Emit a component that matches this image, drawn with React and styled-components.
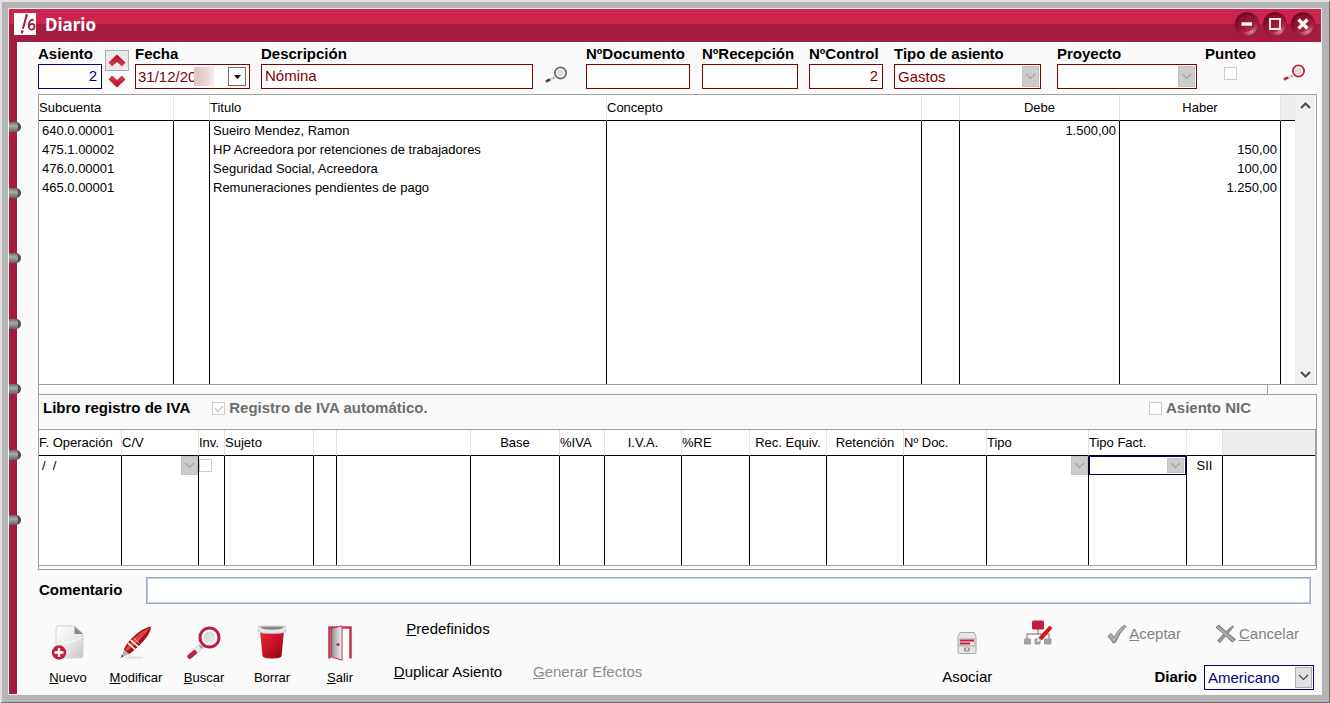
import React from "react";
import styled, { createGlobalStyle, css } from "styled-components";

const COLORS = {
  wine: "#a41c3f",
  crimson: "#cc244c",
  maroon: "#800000",
  navy: "#000080",
  panel: "#fafafa",
  frame: "#b4b4b4",
  line: "#a0a0a4",
  headerLine: "#e2e2e2",
  disabled: "#6d6d6d",
};

const ENTRIES = [
  { account: "640.0.00001", title: "Sueiro Mendez, Ramon", debit: "1.500,00", credit: "" },
  { account: "475.1.00002", title: "HP Acreedora por retenciones de trabajadores", debit: "", credit: "150,00" },
  { account: "476.0.00001", title: "Seguridad Social, Acreedora", debit: "", credit: "100,00" },
  { account: "465.0.00001", title: "Remuneraciones pendientes de pago", debit: "", credit: "1.250,00" },
];

const ENTRY_COLUMNS = [
  { label: "Subcuenta", width: 135 },
  { label: "", width: 36 },
  { label: "Titulo" },
  { label: "Concepto", width: 315 },
  { label: "", width: 38 },
  { label: "Debe", width: 160, align: "center" },
  { label: "Haber", width: 161, align: "center" },
  { label: "", width: 14, blank: true },
];

const VAT_COLUMNS = [
  { label: "F. Operación", width: 83 },
  { label: "C/V", width: 77 },
  { label: "Inv.", width: 26 },
  { label: "Sujeto", width: 89 },
  { label: "", width: 23 },
  { label: "" },
  { label: "Base", width: 89, align: "center" },
  { label: "%IVA", width: 45 },
  { label: "I.V.A.", width: 77, align: "center" },
  { label: "%RE", width: 68 },
  { label: "Rec. Equiv.", width: 77, align: "center" },
  { label: "Retención", width: 77, align: "center" },
  { label: "Nº Doc.", width: 83 },
  { label: "Tipo", width: 102 },
  { label: "Tipo Fact.", width: 98 },
  { label: "", width: 36 },
  { label: "", width: 92, blank: true },
];

const App = () => {
  return (
    <Frame>
      <GlobalStyles />
      <Window>
        <TitleBar>
          <LogoIcon />
          <Title>Diario</Title>
          <WindowActions>
            <WindowButton kind="minimize" label="Minimizar" />
            <WindowButton kind="maximize" label="Maximizar" />
            <WindowButton kind="close" label="Cerrar" />
          </WindowActions>
        </TitleBar>
        <Body>
          <Rail>
            {[0, 1, 2, 3, 4, 5, 6].map((ring) => (
              <Ring key={ring} />
            ))}
          </Rail>
          <Content>
            <EntryForm />
            <EntryTable />
            <Splitter />
            <VatPanel />
            <CommentRow>
              <BoldLabel htmlFor="comentario">Comentario</BoldLabel>
              <CommentInput id="comentario" />
            </CommentRow>
            <Footer />
          </Content>
        </Body>
      </Window>
    </Frame>
  );
};

const EntryForm = () => (
  <Form>
    <Field $gap={3}>
      <BoldLabel htmlFor="asiento">Asiento</BoldLabel>
      <TextInput id="asiento" defaultValue="2" $align="right" $color={COLORS.navy} />
    </Field>
    <Spinner>
      <SpinButton aria-label="Asiento siguiente" $raised>
        <ArrowIcon />
      </SpinButton>
      <SpinButton aria-label="Asiento anterior">
        <ArrowIcon down />
      </SpinButton>
    </Spinner>
    <Field $gap={11}>
      <BoldLabel htmlFor="fecha">Fecha</BoldLabel>
      <DateBox>
        <DateInput id="fecha" defaultValue="31/12/20" />
        <Smudge />
        <DateButton aria-label="Abrir calendario">
          <svg width="7" height="4" viewBox="0 0 7 4">
            <path d="M0 0h7L3.5 4z" fill="#000" />
          </svg>
        </DateButton>
      </DateBox>
    </Field>
    <Field $gap={12}>
      <BoldLabel htmlFor="descripcion">Descripción</BoldLabel>
      <TextInput id="descripcion" defaultValue="Nómina" />
    </Field>
    <IconButton aria-label="Buscar descripción">
      <LensIcon ring="#6a6a6a" grip="#444" />
    </IconButton>
    <Field $gap={12}>
      <BoldLabel htmlFor="documento">NºDocumento</BoldLabel>
      <TextInput id="documento" />
    </Field>
    <Field $gap={11}>
      <BoldLabel htmlFor="recepcion">NºRecepción</BoldLabel>
      <TextInput id="recepcion" />
    </Field>
    <Field $gap={11}>
      <BoldLabel htmlFor="control">NºControl</BoldLabel>
      <TextInput id="control" defaultValue="2" $align="right" />
    </Field>
    <Field $gap={16}>
      <BoldLabel htmlFor="tipo-asiento">Tipo de asiento</BoldLabel>
      <Combo id="tipo-asiento" value="Gastos" disabled />
    </Field>
    <Field $gap={8}>
      <BoldLabel htmlFor="proyecto">Proyecto</BoldLabel>
      <Combo id="proyecto" value="" disabled />
    </Field>
    <CheckField>
      <BoldLabel htmlFor="punteo">Punteo</BoldLabel>
      <Checkbox id="punteo" disabled />
    </CheckField>
    <IconButton aria-label="Buscar asiento" $high>
      <LensIcon ring="#c41e3f" grip="#c41e3f" />
    </IconButton>
  </Form>
);

const TableHead = ({ columns }) => (
  <>
    <colgroup>
      {columns.map((column, index) => (
        <Col key={index} $width={column.width} />
      ))}
    </colgroup>
    <thead>
      <tr>
        {columns.map((column, index) => (
          <HeaderCell key={index} scope="col" $align={column.align} $blank={column.blank}>
            {column.label}
          </HeaderCell>
        ))}
      </tr>
    </thead>
  </>
);

const EntryTable = () => (
  <EntryPanel>
    <Table>
      <TableHead columns={ENTRY_COLUMNS} />
      <tbody>
        {ENTRIES.map((entry) => (
          <tr key={entry.account}>
            <Cell>{entry.account}</Cell>
            <Cell />
            <Cell>{entry.title}</Cell>
            <Cell />
            <Cell />
            <Cell $align="right">{entry.debit}</Cell>
            <Cell $align="right">{entry.credit}</Cell>
            <Cell />
          </tr>
        ))}
        <tr>
          {ENTRY_COLUMNS.map((column, index) => (
            <Cell key={index} $height={187} />
          ))}
        </tr>
      </tbody>
    </Table>
    <ScrollTrack>
      <ScrollButton aria-label="Subir">
        <ChevronIcon up size={11} color="#505050" weight={2} />
      </ScrollButton>
      <ScrollButton aria-label="Bajar">
        <ChevronIcon size={11} color="#505050" weight={2} />
      </ScrollButton>
    </ScrollTrack>
  </EntryPanel>
);

const VatPanel = () => (
  <VatBox>
    <VatHeader>
      <VatTitle>Libro registro de IVA</VatTitle>
      <Checkbox id="iva-auto" defaultChecked disabled />
      <DisabledLabel htmlFor="iva-auto">Registro de IVA automático.</DisabledLabel>
      <Spacer />
      <Checkbox id="nic" disabled />
      <DisabledLabel htmlFor="nic">Asiento NIC</DisabledLabel>
    </VatHeader>
    <VatTableWrapper>
      <Table>
        <TableHead columns={VAT_COLUMNS} />
        <tbody>
          <tr>
            <Cell>/&nbsp; /</Cell>
            <Cell $flush>
              <Combo label="C/V" value="" disabled variant="bare" />
            </Cell>
            <Cell $flush>
              <Checkbox aria-label="Inv." disabled />
            </Cell>
            {VAT_COLUMNS.slice(3, 13).map((column, index) => (
              <Cell key={index} />
            ))}
            <Cell $flush>
              <Combo label="Tipo" value="" disabled variant="bare" />
            </Cell>
            <Cell $flush>
              <Combo label="Tipo Fact." value="" disabled variant="focused" />
            </Cell>
            <Cell $align="center">SII</Cell>
            <Cell />
          </tr>
          <tr>
            {VAT_COLUMNS.map((column, index) => (
              <Cell key={index} $height={90} />
            ))}
          </tr>
        </tbody>
      </Table>
    </VatTableWrapper>
  </VatBox>
);

const Footer = () => (
  <FooterRow>
    <Tool>
      <NewIcon />
      <span><u>N</u>uevo</span>
    </Tool>
    <Tool>
      <PenIcon />
      <span><u>M</u>odificar</span>
    </Tool>
    <Tool>
      <SearchIcon />
      <span><u>B</u>uscar</span>
    </Tool>
    <Tool>
      <TrashIcon />
      <span>Borrar</span>
    </Tool>
    <Tool>
      <DoorIcon />
      <span><u>S</u>alir</span>
    </Tool>
    <LinkStack>
      <TextButton><u>P</u>redefinidos</TextButton>
      <TextButton><u>D</u>uplicar Asiento</TextButton>
    </LinkStack>
    <EffectsButton disabled><u>G</u>enerar Efectos</EffectsButton>
    <Spacer />
    <AssociateButton>
      <DrawerIcon />
      <span>Asociar</span>
    </AssociateButton>
    <ChartButton aria-label="Esquema">
      <HierarchyIcon />
    </ChartButton>
    <Closing>
      <Confirm>
        <ConfirmButton disabled>
          <CheckIcon />
          <span><u>A</u>ceptar</span>
        </ConfirmButton>
        <ConfirmButton disabled>
          <CrossIcon />
          <span><u>C</u>ancelar</span>
        </ConfirmButton>
      </Confirm>
      <JournalPicker>
        <BoldLabel htmlFor="diario">Diario</BoldLabel>
        <Combo id="diario" value="Americano" variant="journal" />
      </JournalPicker>
    </Closing>
  </FooterRow>
);

const Combo = ({ id, label, value, disabled, variant = "boxed" }) => (
  <ComboBox $variant={variant}>
    <ComboSelect id={id} aria-label={label} defaultValue={value} disabled={disabled} $variant={variant}>
      <option value={value}>{value}</option>
    </ComboSelect>
    <ComboArrow $variant={variant}>
      <ChevronIcon size={11} color={variant === "journal" ? "#404040" : "#a3a3a3"} weight={1} />
    </ComboArrow>
  </ComboBox>
);

const WindowButton = ({ kind, label }) => (
  <RoundButton aria-label={label}>
    <svg width="26" height="26" viewBox="0 0 26 26">
      <defs>
        <radialGradient id={`ball-${kind}`} cx="0.68" cy="0.8" r="0.8">
          <stop offset="0" stopColor="#d8889a" />
          <stop offset="0.35" stopColor="#b0304f" />
          <stop offset="0.65" stopColor="#98163a" />
          <stop offset="1" stopColor="#6f0a22" />
        </radialGradient>
      </defs>
      <circle cx="13" cy="13" r="12" fill="#8c1230" />
      <circle cx="13" cy="13" r="11.5" fill={`url(#ball-${kind})`} />
      <circle cx="12.5" cy="12.5" r="8.5" fill="#92142f" opacity="0.65" />
      {kind === "minimize" && <path d="M7.500 13h10.500" stroke="#fff" strokeWidth="3.4" />}
      {kind === "maximize" && (
        <rect x="8" y="8" width="10" height="10" fill="none" stroke="#f8e6ea" strokeWidth="2" />
      )}
      {kind === "close" && (
        <path d="m8.5 8.5 9 9m0-9-9 9" stroke="#fff" strokeWidth="3.2" />
      )}
    </svg>
  </RoundButton>
);

const LogoIcon = () => (
  <svg width="22" height="22" viewBox="0 0 22 22">
    <path d="M0 0h22v22H0z" fill="#fff" />
    <path d="M14 1.200 11.800 1 8 15.500l1.800.5z" fill="#a41c3f" />
    <path d="m7.200 17.200 2.600.2-1 2.800-2 .6z" fill="#a41c3f" />
    <path
      d="M19.8 6.800c-3-.5-4.800 1.800-5 5-.2 3 .8 4.900 2.800 4.900 1.700 0 2.900-1.300 2.900-3.100 0-1.700-1-2.700-2.400-2.700-1.600 0-2.700 1.100-3 2.400"
      fill="none"
      stroke="#a41c3f"
      strokeWidth="1.8"
    />
  </svg>
);

const ArrowIcon = ({ down }) => (
  <svg width="18" height="13" viewBox="0 0 18 13">
    <defs>
      <linearGradient id={down ? "arrow-down" : "arrow-up"} x1="0" y1="0" x2="0" y2="1">
        <stop offset="0" stopColor="#a3122c" />
        <stop offset="1" stopColor="#e03a55" />
      </linearGradient>
    </defs>
    <path
      d="M9 .5 17.500 8.500 14 12.500 9 8 4 12.500.5 8.500z"
      transform={down ? "rotate(180 9 6.500)" : undefined}
      fill={down ? "url(#arrow-down)" : "url(#arrow-up)"}
    />
  </svg>
);

const ChevronIcon = ({ up, size, color, weight }) => (
  <svg width={size} height={size} viewBox="0 0 11 11">
    <path
      d={up ? "m1 8 4.500-4.500L10 8" : "m1 3 4.500 4.500L10 3"}
      fill="none"
      stroke={color}
      strokeWidth={weight + 0.2}
    />
  </svg>
);

const LensIcon = ({ ring, grip }) => (
  <svg width="24" height="18" viewBox="0 0 24 18">
    <path d="m10 11-6 3.500" stroke="#cfcfcf" strokeWidth="2.400" />
    <path d="m8.500 11.500.8 1.500" stroke="#8a8a8a" />
    <path d="M5 13.300 1 15.700" stroke={grip} strokeWidth="2.600" />
    <circle cx="15.500" cy="7" r="5.600" fill="#fff" stroke={ring} strokeWidth="1.800" />
    <circle cx="15.500" cy="7" r="3.300" fill="#dadada" />
  </svg>
);

const SearchIcon = () => (
  <svg width="34" height="36" viewBox="0 0 34 36">
    <defs>
      <linearGradient id="glass" x1="0" y1="0" x2="1" y2="1">
        <stop offset="0" stopColor="#cfcfcf" />
        <stop offset="1" stopColor="#f0f0f0" />
      </linearGradient>
    </defs>
    <path d="M13.500 17.500 5.500 26l3.500 3.500 9-8z" fill="#e9e9e9" stroke="#cfcfcf" strokeWidth="0.800" />
    <path d="m12.500 20.500 2.800 2.800" stroke="#8c8c8c" strokeWidth="1.500" />
    <path d="M7.500 27.500 2.800 31.500" stroke="#c41e3f" strokeWidth="4.800" strokeLinecap="round" />
    <circle cx="22.500" cy="12.500" r="9.500" fill="#fff" stroke="#bf1d40" strokeWidth="3" />
    <circle cx="22.500" cy="12.500" r="6" fill="url(#glass)" />
  </svg>
);

const NewIcon = () => (
  <svg width="34" height="36" viewBox="0 0 34 36">
    <defs>
      <linearGradient id="sheet" x1="0" y1="0" x2="1" y2="1">
        <stop offset="0" stopColor="#fff" />
        <stop offset="0.5" stopColor="#ececec" />
        <stop offset="1" stopColor="#c4c4c4" />
      </linearGradient>
    </defs>
    <path d="M7 1h17l8 8v21q0 3-3 3H8q-3 0-3-3V3q0-2 2-2z" fill="url(#sheet)" stroke="#d2d2d2" />
    <path d="M23.500 1.500V9h8.500z" fill="#8b8b8b" />
    <path d="M6 18q14 1 25-6" stroke="#fff" fill="none" opacity="0.8" />
    <circle cx="8" cy="27.500" r="7.200" fill="#c41e3f" />
    <path d="M8 23v9M3.500 27.500h9" stroke="#fff" strokeWidth="2.400" />
  </svg>
);

const PenIcon = () => (
  <svg width="34" height="36" viewBox="0 0 34 36">
    <ellipse cx="14" cy="32.500" rx="10" ry="1" fill="#dedede" />
    <path d="M2 32.500 5 24.500l5 4.500z" fill="#b5b5b5" />
    <path d="M1.500 33 3 29.500l1.800 1.700z" fill="#555" />
    <path d="M5 24.500C8 17 20 4 31.500 1.500 32.500 3 31 8 27 13 22 19.500 15 26 10 29z" fill="#a90f18" />
    <path d="M6.500 24.500C11 16.500 21 6 30.500 3 27 9 17 19 8.500 26z" fill="#dc4743" />
    <path d="m11.500 14.800 8.300 7.400M9 18l7.500 6.800" stroke="#f0f0f0" strokeWidth="1.600" />
    <path d="m14.500 13 6 5.500" stroke="#ddd" strokeWidth="0.800" />
  </svg>
);

const TrashIcon = () => (
  <svg width="30" height="36" viewBox="0 0 30 36">
    <defs>
      <linearGradient id="bin" x1="0" y1="0" x2="1" y2="1">
        <stop offset="0" stopColor="#e8283c" />
        <stop offset="0.500" stopColor="#cb1228" />
        <stop offset="1" stopColor="#86060f" />
      </linearGradient>
    </defs>
    <path d="M3 6h24l-2.500 25q-.3 2.500-9.500 2.500T5.500 31z" fill="url(#bin)" />
    <path d="M1 3q0-2 2-2h24q2 0 2 2l-.5 3.500Q27 8.500 15 8.500T1.500 6.500z" fill="#e6e6e6" stroke="#bdbdbd" strokeWidth="0.800" />
    <path d="M3 1.800h24q-1 3-12 3t-12-3z" fill="#858585" />
  </svg>
);

const DoorIcon = () => (
  <svg width="28" height="36" viewBox="0 0 28 36">
    <defs>
      <linearGradient id="leaf" x1="0" y1="0" x2="1" y2="0">
        <stop offset="0" stopColor="#8f8f8f" />
        <stop offset="1" stopColor="#f4f4f4" />
      </linearGradient>
    </defs>
    <path d="M3.500 33.500V2.500h21v31" fill="#fff" stroke="#c23b54" strokeWidth="2.600" />
    <path d="M5.500 3.500 16 .8v34.400L5.500 32z" fill="url(#leaf)" stroke="#b6394e" strokeWidth="1" />
    <circle cx="12" cy="19.500" r="1.500" fill="#c41e3f" />
  </svg>
);

const DrawerIcon = () => (
  <svg width="20" height="22" viewBox="0 0 20 22">
    <path d="M3 .5h14l2 4V20q0 1.500-1.500 1.500h-15Q1 21.500 1 20V4.500z" fill="#e6e6e6" stroke="#a8a8a8" />
    <path d="M2.500 6.500h15v7h-15z" fill="#f4dfe3" stroke="#aaa" strokeWidth="0.500" />
    <path d="M3 8.500h14M3 11.500h10" stroke="#c22446" strokeWidth="1.800" />
    <path d="M1 14h18" stroke="#b2b2b2" />
    <rect x="7" y="15.500" width="6" height="4" rx="1" fill="#9a9a9a" />
    <circle cx="10" cy="17.300" r="1" fill="#fff" />
  </svg>
);

const HierarchyIcon = () => (
  <svg width="30" height="26" viewBox="0 0 30 26">
    <path d="M15 9v6M4 19v-5h22v5" fill="none" stroke="#9c9c9c" strokeWidth="1.500" />
    <rect x="9" y="0.500" width="12" height="9" rx="1.500" fill="#c41e3f" />
    <rect x="1" y="18.500" width="7" height="6" rx="1" fill="#a0a0a0" />
    <rect x="11.500" y="18.500" width="6" height="6" rx="1" fill="#a0a0a0" />
    <rect x="21" y="18.500" width="7.500" height="6" rx="1" fill="#a0a0a0" />
    <path d="m13 23 2-5.500 3 3z" fill="#eee" stroke="#999" strokeWidth="0.500" />
    <path d="M16 17.500 26.500 6 29 8.300 18.800 20z" fill="#e01515" stroke="#a80d0d" strokeWidth="0.600" />
  </svg>
);

const CheckIcon = () => (
  <svg width="20" height="20" viewBox="0 0 20 20">
    <path d="M.8 12.500 4 9.500q2 1.500 3 4.500Q11 5 17.500 1l1.500 1.500Q12 9 8.500 18.500L6 19Q4 14.500.8 12.500z" fill="#9b9b9b" stroke="#777" strokeWidth="0.800" />
    <path d="M3 11.500q3 1.500 4 5Q11 7 17.500 2" fill="none" stroke="#c6c6c6" />
  </svg>
);

const CrossIcon = () => (
  <svg width="22" height="20" viewBox="0 0 22 20">
    <path d="M1 3.500 4 1l7 6.500L17.500 2l1 .8L13 9.300l7.500 6-3.200 2.900-6.600-6.400-5.500 6.700-2.600-1.700 6-7z" fill="#999" stroke="#6f6f6f" strokeWidth="0.800" />
    <path d="m3 3.500 15 13" stroke="#c4c4c4" />
  </svg>
);

const GlobalStyles = createGlobalStyle`
  *, *::before, *::after {
    box-sizing: border-box;
  }

  body {
    margin: 0;
    font-family: "Liberation Sans", Arial, sans-serif;
    font-size: 13px;
    color: #000;
  }

  button, input, select {
    margin: 0;
    padding: 0;
    border: none;
    border-radius: 0;
    background: none;
    font: inherit;
    color: inherit;
    outline: none;
  }

  svg {
    display: block;
  }
`;

const Frame = styled.main`
  min-height: 100vh;
  border: 1px solid #6e6e6e;
  border-top: 2px solid #e0e0e0;
  border-left: 2px solid #e0e0e0;
  display: flex;
`;

const Window = styled.div`
  flex: 1;
  min-width: 0;
  display: flex;
  flex-direction: column;
  padding: 1px;
  border: 7px solid ${COLORS.frame};
  border-top-width: 6px;
  border-left-width: 6px;
  background: #f2f2f2;
`;

const TitleBar = styled.header`
  height: 33px;
  display: flex;
  align-items: center;
  gap: 9px;
  padding: 0 5px 3px;
  background: linear-gradient(${COLORS.crimson} 15px, ${COLORS.wine} 15px);
`;

const Title = styled.h1`
  margin: 0;
  padding-top: 2px;
  flex: 1;
  font: 700 17px/24px "Noto Sans", "Open Sans", sans-serif;
  color: #fff;
`;

const WindowActions = styled.div`
  display: flex;
  gap: 2px;
`;

const RoundButton = styled.button`
  width: 26px;
  height: 26px;
`;

const Body = styled.div`
  flex: 1;
  display: flex;
  background: ${COLORS.panel};
`;

const Rail = styled.div`
  width: 8px;
  padding: 80px 0 169px;
  display: flex;
  flex-direction: column;
  justify-content: space-between;
  background: ${COLORS.wine};
`;

const Ring = styled.span`
  width: 12px;
  height: 10px;
  flex: none;
  border-right: 3px solid #4c4c4c;
  border-radius: 0 5px 5px 0;
  background: linear-gradient(#6b6b6b, #a9a9a9 40%, #636363);
`;

const Content = styled.div`
  flex: 1;
  min-width: 0;
  padding: 3px 4px 3px 21px;
`;

const Form = styled.form`
  display: grid;
  grid-template-columns: 67px 30px 126px 1fr 41px 116px 107px 85px 163px 148px 78px 34px;
  margin-bottom: 2px;
`;

const Field = styled.div`
  min-width: 0;
  padding-right: ${(p) => p.$gap}px;
`;

const BoldLabel = styled.label`
  display: block;
  padding-bottom: 1px;
  font-size: 15px;
  font-weight: 700;
  line-height: 18px;
  white-space: nowrap;
`;

const boxed = css`
  width: 100%;
  height: 25px;
  border: 1px solid ${COLORS.maroon};
  background: #fff;
`;

const TextInput = styled.input`
  ${boxed}
  display: block;
  padding: 0 4px 2px 3px;
  border-color: ${(p) => p.$color || COLORS.maroon};
  color: ${(p) => p.$color || COLORS.maroon};
  font-size: 15px;
  text-align: ${(p) => p.$align || "left"};
`;

const Spinner = styled.div`
  width: 24px;
  padding-top: 5px;
`;

const SpinButton = styled.button.attrs({ type: "button" })`
  width: 24px;
  height: 21px;
  display: flex;
  align-items: center;
  justify-content: center;
  border: 1px solid ${(p) => (p.$raised ? "#adadad" : "transparent")};
  background: ${(p) => (p.$raised ? "#e9e9e9" : "none")};
`;

const DateBox = styled.div`
  ${boxed}
  display: flex;
  align-items: center;
  padding: 0 3px 0 2px;
`;

const DateInput = styled.input`
  width: 56px;
  height: 21px;
  flex: none;
  padding-bottom: 1px;
  font-size: 15px;
  color: ${COLORS.maroon};
`;

const Smudge = styled.span`
  width: 20px;
  height: 19px;
  background: linear-gradient(90deg, #e2c0c4, #ecd2d6 60%, #f8ecee);
`;

const DateButton = styled.button.attrs({ type: "button" })`
  width: 18px;
  height: 19px;
  margin-left: auto;
  display: flex;
  align-items: center;
  justify-content: center;
  border: 1px solid #6e6e6e;
`;

const IconButton = styled.button.attrs({ type: "button" })`
  align-self: start;
  width: 24px;
  padding-top: ${(p) => (p.$high ? 19 : 21)}px;
`;

const CheckField = styled.div`
  width: 51px;
  display: flex;
  flex-direction: column;
  align-items: center;
  gap: 3px;
`;

const Checkbox = styled.input.attrs({ type: "checkbox" })`
  appearance: none;
  display: block;
  width: 13px;
  height: 13px;
  flex: none;
  border: 1px solid #cccccc;
  background: #fff;

  &:checked::before {
    content: "";
    display: block;
    width: 8px;
    height: 5px;
    margin: 2px 0 0 2px;
    border-left: 1px solid #b4b4b4;
    border-bottom: 1px solid #b4b4b4;
    transform: rotate(-45deg);
  }
`;

const ComboBox = styled.div`
  position: relative;
  width: ${(p) => (p.$variant === "journal" ? "110px" : "100%")};
`;

const ComboSelect = styled.select`
  ${boxed}
  appearance: none;
  display: block;
  padding: 0 24px 0 3px;
  font-size: 15px;
  color: ${COLORS.maroon};
  opacity: 1;

  ${(p) =>
    p.$variant === "journal" &&
    css`
      border-color: ${COLORS.navy};
      color: ${COLORS.navy};
    `}

  ${(p) =>
    p.$variant === "bare" &&
    css`
      height: 19px;
      border: none;
    `}

  ${(p) =>
    p.$variant === "focused" &&
    css`
      height: 19px;
      border-color: ${COLORS.navy};
      border-bottom-color: #000040;
    `}
`;

const ComboArrow = styled.span`
  position: absolute;
  top: 2px;
  right: 2px;
  bottom: 2px;
  width: 17px;
  display: flex;
  align-items: center;
  justify-content: center;
  border: 1px solid #c2c2c2;
  background: #cccccc;
  pointer-events: none;

  ${(p) =>
    p.$variant === "bare" &&
    css`
      top: 0;
      right: 0;
      bottom: 0;
    `}

  ${(p) =>
    p.$variant === "journal" &&
    css`
      border-color: #adadad;
      background: #e1e1e1;
    `}
`;

const EntryPanel = styled.section`
  display: flex;
  border: 1px solid ${COLORS.line};
  background: #fff;
`;

const Table = styled.table`
  flex: 1;
  width: 100%;
  min-width: 0;
  table-layout: fixed;
  border-collapse: separate;
  border-spacing: 0;
`;

const Col = styled.col`
  width: ${(p) => (p.$width ? `${p.$width}px` : "auto")};
`;

const HeaderCell = styled.th`
  height: 26px;
  padding: 0;
  border-right: 1px solid ${COLORS.headerLine};
  border-bottom: 1px solid #000;
  background: ${(p) => (p.$blank ? "#eeeeee" : "#fff")};
  font-weight: 400;
  line-height: 16px;
  text-align: ${(p) => p.$align || "left"};
  white-space: nowrap;

  &:last-child {
    border-right: none;
  }
`;

const Cell = styled.td`
  height: ${(p) => p.$height || 19}px;
  padding: ${(p) => (p.$flush ? 0 : "0 3px")};
  border-right: 1px solid #000;
  line-height: 16px;
  text-align: ${(p) => p.$align || "left"};
  white-space: nowrap;

  &:last-child {
    border-right: none;
  }
`;

const ScrollTrack = styled.div`
  width: 21px;
  display: flex;
  flex-direction: column;
  justify-content: space-between;
  border-right: 1px solid #fff;
  background: #f0f0f0;
`;

const ScrollButton = styled.button`
  height: 20px;
  display: flex;
  align-items: center;
  justify-content: center;
`;

const Splitter = styled.div`
  height: 9px;
  margin-right: 49px;
  border-left: 1px solid ${COLORS.line};
  border-right: 1px solid ${COLORS.line};
`;

const VatBox = styled.section`
  padding-bottom: 3px;
  border: 1px solid ${COLORS.line};
`;

const VatHeader = styled.div`
  display: flex;
  align-items: center;
  height: 34px;
  padding: 0 65px 8px 4px;
`;

const VatTitle = styled.h2`
  margin: 0 22px 0 0;
  font-size: 15px;
  line-height: 18px;
`;

const DisabledLabel = styled(BoldLabel)`
  margin-left: 4px;
  color: ${COLORS.disabled};
`;

const Spacer = styled.div`
  flex: 1;
`;

const VatTableWrapper = styled.div`
  border: 1px solid ${COLORS.line};
  border-left: none;
  background: #fff;
`;

const CommentRow = styled.div`
  display: grid;
  grid-template-columns: 107px 1fr;
  align-items: center;
  padding: 7px 6px 0 1px;
`;

const CommentInput = styled.input`
  height: 27px;
  padding: 0 4px;
  border: 1px solid #9fa9b8;
  box-shadow: inset 0 0 0 1px #b5d0f2;
  background: #fff;
`;

const FooterRow = styled.footer`
  display: flex;
  align-items: flex-start;
  padding: 16px 3px 0 0;
`;

const Tool = styled.button`
  width: 68px;
  height: 61px;
  margin-top: 5px;
  display: flex;
  flex-direction: column;
  align-items: center;
  justify-content: space-between;
  line-height: 16px;

  &:first-child {
    width: 60px;
    margin-right: 4px;
  }
`;

const LinkStack = styled.div`
  width: 124px;
  margin-left: 12px;
  display: flex;
  flex-direction: column;
  align-items: center;
  gap: 25px;
`;

const TextButton = styled.button`
  font-size: 15px;
  line-height: 18px;
  white-space: nowrap;

  &:disabled {
    color: #8c8c8c;
  }
`;

const EffectsButton = styled(TextButton)`
  margin-top: 43px;
  margin-left: 23px;
`;

const AssociateButton = styled.button`
  width: 60px;
  margin-top: 12px;
  display: flex;
  flex-direction: column;
  align-items: center;
  gap: 14px;
  font-size: 15px;
  line-height: 18px;
`;

const ChartButton = styled.button`
  margin-left: 26px;
  margin-right: 54px;
`;

const Closing = styled.div`
  display: flex;
  flex-direction: column;
  align-items: flex-end;
  gap: 21px;
`;

const Confirm = styled.div`
  display: flex;
  gap: 34px;
  padding: 4px 15px 0 0;
`;

const ConfirmButton = styled.button`
  display: flex;
  align-items: center;
  gap: 2px;
  font-size: 15px;
  line-height: 20px;
  color: #838383;
`;

const JournalPicker = styled.div`
  display: flex;
  align-items: center;
  gap: 7px;
`;

export default App;
